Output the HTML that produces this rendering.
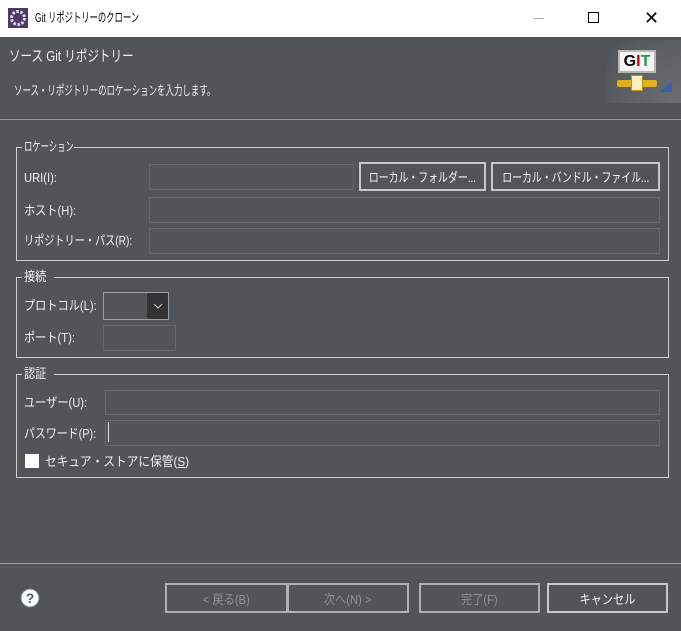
<!DOCTYPE html>
<html><head><meta charset="utf-8"><style>
*{box-sizing:border-box;margin:0;padding:0}
body{width:681px;height:631px;background:#515558;font-family:"Liberation Sans","Noto Sans CJK JP",sans-serif;font-size:13px;color:#f0f0f0;position:relative;overflow:hidden}
.a{position:absolute}
.c{display:inline-block;white-space:nowrap;transform:scaleX(.86);transform-origin:0 50%}
.in{position:absolute;border:1px solid #63676a;background:#515558}
.grp{position:absolute;border:1px solid #d0d0d0}
.gl{position:absolute;background:#515558;padding:0 2px;top:-10px;left:5px;line-height:18px;white-space:nowrap;overflow:hidden}
.lb{position:absolute;line-height:16px;white-space:nowrap}
.btn{position:absolute;border:2px solid #c8c8c8;text-align:center;color:#f5f5f5;display:flex;align-items:center;justify-content:center;background:#515558;white-space:nowrap;overflow:hidden}
.btn .c{transform-origin:50% 50%}
.btn.d{border-color:#b0b0b0;color:#8f9396}
</style></head><body>
<div class="a" style="left:0;top:0;width:681px;height:37px;background:#fff;color:#000"></div>
<svg class="a" style="left:8px;top:8px" width="20" height="20" viewBox="0 0 20 20"><rect width="20" height="20" fill="#4b3a6a"/><circle cx="10" cy="10" r="6.5" fill="none" stroke="#ddd" stroke-width="3" stroke-dasharray="2.5 1.6"/><circle cx="10" cy="10" r="3.5" fill="#4b3a6a"/></svg>
<div class="a" style="left:35px;top:9px;color:#000;font-size:13px;line-height:18px"><span class="c" style="transform:scaleX(.64)">Git リポジトリーのクローン</span></div>
<div class="a" style="left:533px;top:18px;width:11px;height:1px;background:#aaa"></div>
<div class="a" style="left:588px;top:12px;width:11px;height:11px;border:1px solid #000"></div>
<div class="a" style="left:644px;top:8px;font-size:18px;color:#000;line-height:20px">✕</div>

<div class="a" style="left:9px;top:47px;font-size:15px;line-height:20px"><span class="c" style="transform:scaleX(.77)">ソース Git リポジトリー</span></div>
<div class="a" style="left:14px;top:82px;font-size:13px;line-height:18px"><span class="c" style="transform:scaleX(.65)">ソース・リポジトリーのロケーションを入力します。</span></div>
<div class="a" style="left:606px;top:40px;width:75px;height:63px;background:radial-gradient(circle at 100% 100%,#6a6e72 0,#5c6064 60%,#515558 90%)"></div>
<div class="a" style="left:618px;top:50px;width:38px;height:23px;background:#f4f4f4;border:2px solid #b8b8b0;font-weight:bold;font-size:16px;line-height:19px;text-align:center;color:#000">G<span style="color:#c00">I</span><span style="color:#18a040">T</span></div>
<div class="a" style="left:617px;top:80px;width:40px;height:7px;background:#e0b020;border-radius:2px"></div>
<div class="a" style="left:631px;top:75px;width:12px;height:16px;background:#f8f0c0;border:1px solid #c09010"></div>
<svg class="a" style="left:660px;top:81px" width="12" height="11"><path d="M0 11L12 0V11Z" fill="#3a60b0"/></svg>
<div class="a" style="left:0;top:119px;width:681px;height:1px;background:#9a9c9e"></div>

<div class="grp" style="left:16px;top:147px;width:653px;height:114px"><div class="gl" style="width:52px"><span class="c" style="transform:scaleX(.64)">ロケーション</span></div></div>
<div class="lb" style="left:24px;top:170px"><span class="c">URI(I):</span></div>
<div class="in" style="left:149px;top:164px;width:205px;height:26px"></div>
<div class="btn" style="left:359px;top:162px;width:127px;height:29px"><span class="c" style="transform:scaleX(.76)">ローカル・フォルダー...</span></div>
<div class="btn" style="left:491px;top:162px;width:169px;height:29px"><span class="c" style="transform:scaleX(.76)">ローカル・バンドル・ファイル...</span></div>
<div class="lb" style="left:24px;top:203px"><span class="c">ホスト(H):</span></div>
<div class="in" style="left:149px;top:197px;width:511px;height:26px"></div>
<div class="lb" style="left:24px;top:233px"><span class="c" style="transform:scaleX(.78)">リポジトリー・パス(R):</span></div>
<div class="in" style="left:149px;top:228px;width:511px;height:26px"></div>

<div class="grp" style="left:16px;top:277px;width:653px;height:81px"><div class="gl" style="width:32px"><span class="c">接続</span></div></div>
<div class="lb" style="left:24px;top:298px"><span class="c">プロトコル(L):</span></div>
<div class="a" style="left:103px;top:292px;width:66px;height:28px;border:1px solid #a0a0a0;background:#333"><div class="a" style="left:0;top:0;width:43px;height:26px;background:#515558"></div><svg class="a" style="left:49px;top:9px" width="10" height="8"><path d="M1 2L5 6L9 2" fill="none" stroke="#ccc" stroke-width="1"/></svg></div>
<div class="lb" style="left:24px;top:330px"><span class="c">ポート(T):</span></div>
<div class="in" style="left:103px;top:325px;width:73px;height:26px"></div>

<div class="grp" style="left:16px;top:374px;width:653px;height:104px"><div class="gl" style="width:32px"><span class="c">認証</span></div></div>
<div class="lb" style="left:24px;top:395px"><span class="c">ユーザー(U):</span></div>
<div class="in" style="left:105px;top:390px;width:555px;height:25px"></div>
<div class="lb" style="left:24px;top:426px"><span class="c" style="transform:scaleX(.84)">パスワード(P):</span></div>
<div class="in" style="left:105px;top:420px;width:555px;height:26px"></div>
<div class="a" style="left:108px;top:422px;width:1px;height:20px;background:#ddd"></div>
<div class="a" style="left:25px;top:454px;width:14px;height:14px;background:#fff"></div>
<div class="lb" style="left:45px;top:454px"><span class="c" style="transform:scaleX(.9)">セキュア・ストアに保管(<u>S</u>)</span></div>

<div class="a" style="left:0;top:563px;width:681px;height:1px;background:#9a9c9e"></div>
<svg class="a" style="left:20px;top:588px" width="20" height="20"><circle cx="10" cy="10" r="9" fill="#fff" stroke="#6a7fa0" stroke-width="1"/><text x="10" y="15" font-size="14" font-weight="bold" text-anchor="middle" fill="#445a80" font-family="Liberation Sans">?</text></svg>
<div class="btn d" style="left:165px;top:583px;width:123px;height:30px"><span class="c">&lt; 戻る(B)</span></div>
<div class="btn d" style="left:287px;top:583px;width:122px;height:30px"><span class="c">次へ(N) &gt;</span></div>
<div class="btn d" style="left:419px;top:583px;width:121px;height:30px"><span class="c">完了(F)</span></div>
<div class="btn" style="left:547px;top:583px;width:121px;height:30px"><span class="c">キャンセル</span></div>
</body></html>
